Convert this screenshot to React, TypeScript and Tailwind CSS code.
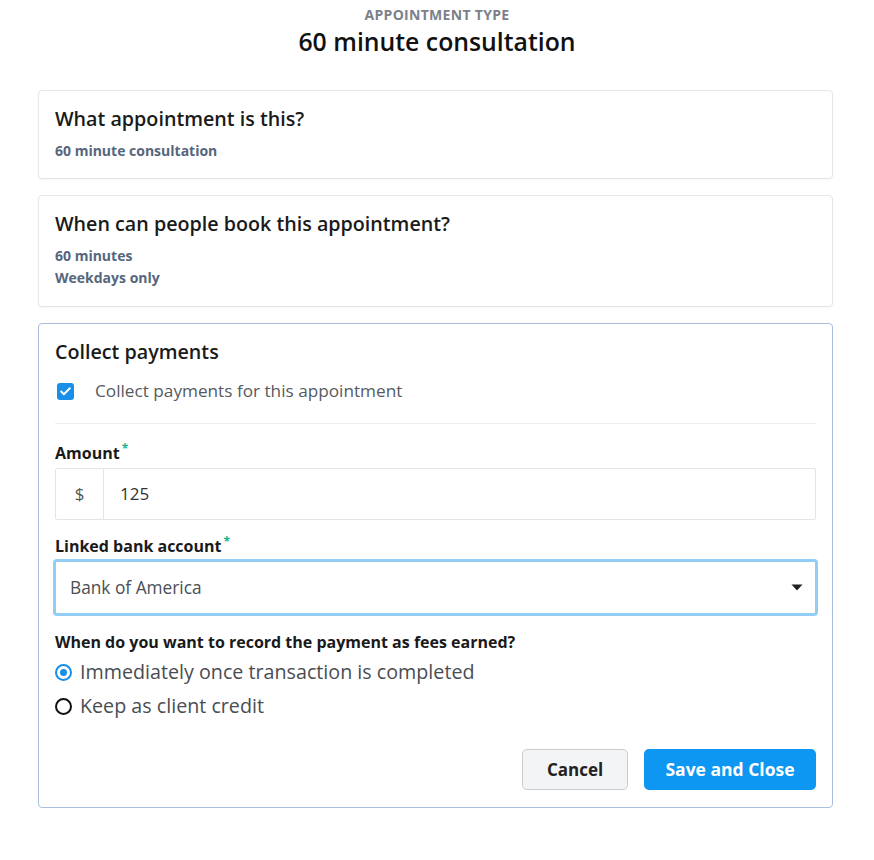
import { Check } from 'lucide-react';

function Card({ title, children, active }: { title: string; children: React.ReactNode; active?: boolean }) {
  return (
    <div
      className={`rounded-[4px] border bg-white px-4 ${
        active ? 'border-[#a9bfdc]' : 'border-[#e3e6ea] shadow-[0_1px_2px_rgba(0,0,0,0.04)]'
      }`}
    >
      <h2 className="pt-[15px] text-[19.7px] leading-[26px] font-semibold text-[#1a1a1a]">{title}</h2>
      {children}
    </div>
  );
}

function Required() {
  return <span className="relative -top-[6px] ml-[2px] text-[12px] text-[#19b38a]">*</span>;
}

export default function App() {
  return (
    <div className="min-h-[860px] bg-white font-['Open_Sans',sans-serif] text-[#222]">
      <div className="pt-[6px] text-center">
        <p className="text-[14px] leading-[18px] font-bold tracking-[0.3px] text-[#7b8089] uppercase">
          Appointment type
        </p>
        <h1 className="text-[24.8px] leading-[34px] font-semibold text-[#111]">60 minute consultation</h1>
      </div>

      <div className="mx-[38px] mt-[32px] flex w-[795px] flex-col gap-[16px]">
        <Card title="What appointment is this?">
          <p className="mt-[9px] pb-[17px] text-[14px] leading-[20px] font-bold text-[#56667c]">
            60 minute consultation
          </p>
        </Card>

        <Card title="When can people book this appointment?">
          <div className="mt-[8px] pb-[17px] text-[14px] leading-[22px] font-bold text-[#56667c]">
            <p>60 minutes</p>
            <p>Weekdays only</p>
          </div>
        </Card>

        <Card title="Collect payments" active>
          <label className="mt-[14px] flex items-center gap-[21px] pl-[2px]">
            <span className="flex h-[17px] w-[17px] items-center justify-center rounded-[3px] bg-[#1a8fe8]">
              <Check className="h-[13px] w-[13px] text-white" strokeWidth={3.5} />
            </span>
            <span className="text-[17.2px] leading-[24px] text-[#555a60]">Collect payments for this appointment</span>
          </label>

          <div className="mt-[20px] border-t border-[#eceef0]" />

          <label className="mt-[18px] block text-[16px] leading-[22px] font-bold text-[#1a1a1a]">
            Amount
            <Required />
          </label>
          <div className="mt-[2px] flex h-[52px] rounded-[2px] border border-[#e2e4e7]">
            <span className="flex w-[48px] items-center justify-center border-r border-[#e2e4e7] text-[17px] text-[#555]">
              $
            </span>
            <span className="flex items-center pl-[16px] text-[17px] text-[#333]">125</span>
          </div>

          <label className="mt-[15px] block text-[16px] leading-[22px] font-bold text-[#1a1a1a]">
            Linked bank account
            <Required />
          </label>
          <div className="-mx-[2px] flex h-[57px] items-center justify-between rounded-[4px] border-[3px] border-[#92cdf3] pr-[12px] pl-[14px]">
            <span className="text-[17.3px] text-[#4a4f55]">Bank of America</span>
            <svg width="12" height="7" viewBox="0 0 12 7" className="text-[#222]">
              <path d="M0.5 0.5h11L6 6.5z" fill="currentColor" />
            </svg>
          </div>

          <p className="mt-[15px] text-[16px] leading-[22px] font-bold text-[#1a1a1a]">
            When do you want to record the payment as fees earned?
          </p>
          <div className="mt-[6px] flex flex-col gap-[8px]">
            <label className="flex items-center gap-[8px]">
              <span className="flex h-[17px] w-[17px] items-center justify-center rounded-full border-2 border-[#1a8fe8]">
                <span className="h-[7px] w-[7px] rounded-full bg-[#1a8fe8]" />
              </span>
              <span className="text-[19.7px] leading-[26px] text-[#4a4d52]">Immediately once transaction is completed</span>
            </label>
            <label className="flex items-center gap-[8px]">
              <span className="h-[17px] w-[17px] rounded-full border-2 border-[#111]" />
              <span className="text-[19.7px] leading-[26px] text-[#4a4d52]">Keep as client credit</span>
            </label>
          </div>

          <div className="mt-[30px] flex justify-end gap-[16px] pb-[17px]">
            <button className="h-[41px] w-[106px] rounded-[5px] border border-[#c9cccf] bg-[#f3f4f5] text-[17px] font-bold text-[#222]">
              Cancel
            </button>
            <button className="h-[41px] w-[172px] rounded-[5px] bg-[#0d96f2] text-[17.5px] font-bold text-white">
              Save and Close
            </button>
          </div>
        </Card>
      </div>
    </div>
  );
}
